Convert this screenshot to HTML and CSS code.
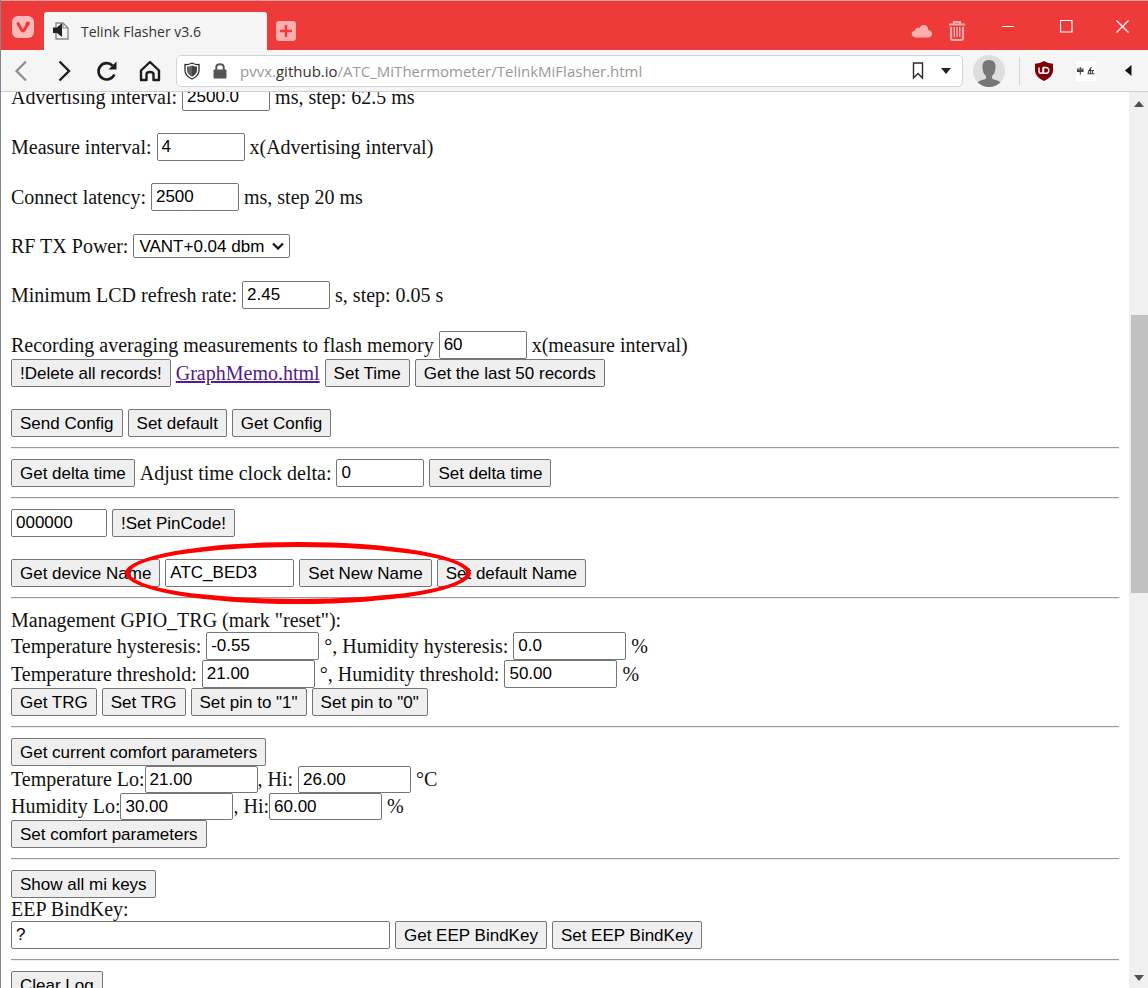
FILE: index.html
```html
<!DOCTYPE html>
<html lang="en">
<head>
<meta charset="utf-8">
<title>Telink Flasher v3.6</title>
<link rel="stylesheet" href="styles.css">
</head>
<body>
<div class="window">
  <header class="titlebar">
    <button class="icon-btn vivaldi" aria-label="Menu">
      <svg width="22" height="22" viewBox="0 0 22 22"><rect width="22" height="22" rx="6" fill="#ffb9b9"/><path d="M6 7.600 9.800 14.200q1.200 1.600 2.400 0L15.500 8" fill="none" stroke="#ef3a3a" stroke-width="3" stroke-linecap="round" stroke-linejoin="round"/><circle cx="15.800" cy="7.600" r="2.200" fill="#ef3a3a"/></svg>
    </button>
    <div class="tab">
      <svg width="16" height="18" viewBox="0 0 16 18"><path d="M3 1h7l5 5v11H3z" fill="#f5f5f5" stroke="#8a8a8a" stroke-width="1.4"/><path d="M10 1v5h5" fill="none" stroke="#8a8a8a" stroke-width="1.2"/><path d="M0 5.500h4L9 1v14l-5-4H0z" fill="#222"/></svg>
      <span>Telink Flasher v3.6</span>
    </div>
    <button class="icon-btn new-tab" aria-label="New tab">
      <svg width="20" height="20" viewBox="0 0 20 20"><rect width="20" height="20" rx="3" fill="#ffadad"/><path d="M10 4v12M4 10h12" stroke="#ef3a3a" stroke-width="2.400"/></svg>
    </button>
    <div class="window-tools">
      <button class="icon-btn cloud" aria-label="Sync"><svg width="22" height="14" viewBox="0 0 22 14"><path d="M4.500 13.500C-.5 13-.5 7 4 6.500 4.500 4 6.500 3.200 8.500 4 10-.2 17-.5 17.300 6c5 .3 5 7.500 0 7.500z" fill="#ffadad"/></svg></button>
      <button class="icon-btn trash" aria-label="Closed tabs"><svg width="18" height="20" viewBox="0 0 18 20"><path d="M1 3.500h16M6 2.500V1h6v1.500" fill="none" stroke="#ffadad" stroke-width="2.200"/><path d="M3 6v11q0 2 2 2h8q2 0 2-2V6" fill="none" stroke="#ffadad" stroke-width="2.200"/><path d="M6.300 6v10M9 6v10M11.700 6v10" stroke="#ffadad" stroke-width="1.400"/></svg></button>
      <button class="icon-btn minimize" aria-label="Minimize"><svg width="13" height="13" viewBox="0 0 13 13"><path d="M0 6.500h12" stroke="#fff"/></svg></button>
      <button class="icon-btn maximize" aria-label="Maximize"><svg width="13" height="13" viewBox="0 0 13 13"><path d="M.5.5h11.500v11.500H.5z" fill="none" stroke="#fff" stroke-width="1.200"/></svg></button>
      <button class="icon-btn close" aria-label="Close"><svg width="13" height="13" viewBox="0 0 13 13"><path d="m.5.5 12 12m0-12-12 12" stroke="#fff" stroke-width="1.200"/></svg></button>
    </div>
  </header>

  <nav class="toolbar">
    <div class="nav-buttons">
      <button class="icon-btn" aria-label="Back"><svg width="22" height="22" viewBox="0 0 22 22"><path d="M16 1.500 6.500 11l9.500 9.500" fill="none" stroke="#8c8c8c" stroke-width="2.200"/></svg></button>
      <button class="icon-btn" aria-label="Forward"><svg width="22" height="22" viewBox="0 0 22 22"><path d="m6.500 1.500 9.500 9.500-9.500 9.500" fill="none" stroke="#1c1c1c" stroke-width="2.400"/></svg></button>
      <button class="icon-btn" aria-label="Reload"><svg width="22" height="22" viewBox="0 0 22 22"><path d="M18.300 14.500A8.200 8.200 0 1 1 16.500 5.500" fill="none" stroke="#1c1c1c" stroke-width="2.600"/><path d="M20.500 1.500v8h-8z" fill="#1c1c1c"/></svg></button>
      <button class="icon-btn" aria-label="Home"><svg width="22" height="22" viewBox="0 0 22 22"><path d="M2 10.500 11 2l9 8.500V20h-5.500v-5.500q0-2.500-3.500-2.500t-3.500 2.500V20H2z" fill="none" stroke="#1c1c1c" stroke-width="2.400" stroke-linejoin="round"/></svg></button>
    </div>
    <div class="address">
      <svg width="16" height="18" viewBox="0 0 16 18"><path d="M8 1q4 2 7 1.500V9q-.5 5-7 8-6.500-3-7-8V2.500Q4 3 8 1z" fill="#fff" stroke="#2b2b2b" stroke-width="1.300"/><path d="M8 3.500q2.500 1.200 5 1.100V9q-.6 3.500-5 5.700z" fill="#444"/><path d="M8 3.500q-2.500 1.200-5 1.100V9q.6 3.500 5 5.700z" fill="#666"/></svg>
      <svg class="lock" width="14" height="16" viewBox="0 0 14 16"><rect x=".5" y="6.500" width="13" height="9" rx="1" fill="#555"/><path d="M3.300 7V4.500q0-3.200 3.700-3.200t3.700 3.200V7" fill="none" stroke="#555" stroke-width="2"/></svg>
      <div class="url" role="textbox" aria-label="Address">pvvx.<b>github.io</b>/ATC_MiThermometer/TelinkMiFlasher.html</div>
      <button class="icon-btn" aria-label="Bookmark"><svg width="12" height="18" viewBox="0 0 12 18"><path d="M1.500 1h9v15L6 11.500 1.500 16z" fill="#fff" stroke="#2b2b2b" stroke-width="1.400"/></svg></button>
      <button class="icon-btn history" aria-label="Address history"><svg width="10" height="6" viewBox="0 0 10 6"><path d="M0 0h10L5 6z" fill="#222"/></svg></button>
    </div>
    <button class="icon-btn profile" aria-label="Profile"><svg width="32" height="32" viewBox="0 0 32 32"><circle cx="16" cy="16" r="16" fill="#dedede"/><path d="M16 5c5 0 7 3.500 6.500 8-.3 4-1.500 6.500-3.500 8v2.500c2 1.500 6 1.500 8.500 3.800Q23 32 16 32T4.500 27.300C7 25 11 25 13 23.500V21c-2-1.500-3.200-4-3.500-8C9 8.500 11 5 16 5z" fill="#777"/></svg></button>
    <div class="extensions">
      <button class="icon-btn" aria-label="uBlock"><svg width="20" height="20" viewBox="0 0 20 20"><path d="M10 0q4 2.600 9 2.800V10q-.5 6-9 10-8.500-4-9-10V2.800Q6 2.600 10 0z" fill="#800008"/><path d="M5 6.500v4q0 1.800 2 1.800t2-1.800v-4M9.500 6.500v5.800h2q3.300 0 3.300-2.900t-3.300-2.900z" fill="none" stroke="#fff" stroke-width="1.400"/></svg></button>
      <button class="icon-btn" aria-label="Translate"><svg width="20" height="20" viewBox="0 0 20 20"><rect width="20" height="20" fill="#fff"/><path d="M1 9.500h6.500M4.300 6v7.500M1.500 8h5.500v2.500H1.500zM15.500 6 13 9.500h5M14.500 7.500v5M11.500 12.800h7M13 10l-1 2.500M16.500 9.500v3" fill="none" stroke="#444" stroke-width="1.100"/></svg></button>
      <button class="icon-btn" aria-label="Toggle extensions"><svg width="7" height="11" viewBox="0 0 7 11"><path d="M6.500 0v11L0 5.500z" fill="#111"/></svg></button>
    </div>
  </nav>

  <div class="viewport">
    <main class="page">
      <div class="row"><label for="adv">Advertising interval:</label><input id="adv" class="short" value="2500.0"><span>ms, step: 62.5 ms</span></div>
      <div class="row spaced"><label for="meas">Measure interval:</label><input id="meas" class="short" value="4"><span>x(Advertising interval)</span></div>
      <div class="row spaced"><label for="lat">Connect latency:</label><input id="lat" class="short" value="2500"><span>ms, step 20 ms</span></div>
      <div class="row spaced"><label for="power">RF TX Power:</label><span class="select"><select id="power"><option>VANT+0.04 dbm</option></select><svg width="12" height="8" viewBox="0 0 12 8"><path d="m1 1.500 5 5 5-5" fill="none" stroke="#111" stroke-width="2.200"/></svg></span></div>
      <div class="row spaced"><label for="lcd">Minimum LCD refresh rate:</label><input id="lcd" class="short" value="2.45"><span>s, step: 0.05 s</span></div>
      <div class="row spaced"><label for="rec">Recording averaging measurements to flash memory</label><input id="rec" class="short" value="60"><span>x(measure interval)</span></div>
      <div class="row"><button>!Delete all records!</button><a href="#graph">GraphMemo.html</a><button>Set Time</button><button>Get the last 50 records</button></div>
      <div class="row spaced"><button>Send Config</button><button>Set default</button><button>Get Config</button></div>
      <hr>
      <div class="row"><button>Get delta time</button><label for="delta">Adjust time clock delta:</label><input id="delta" class="short" value="0"><button>Set delta time</button></div>
      <hr>
      <div class="row"><input class="pin" aria-label="Pin code" value="000000"><button>!Set PinCode!</button></div>
      <div class="row spaced marked"><button>Get device Name</button><input class="name" aria-label="Device name" value="ATC_BED3"><button>Set New Name</button><button>Set default Name</button><span class="ring"></span></div>
      <hr>
      <div class="line">Management GPIO_TRG (mark "reset"):</div>
      <div class="row"><label for="th">Temperature hysteresis:</label><input id="th" value="-0.55"><label for="hh">°, Humidity hysteresis:</label><input id="hh" value="0.0"><span>%</span></div>
      <div class="row"><label for="tt">Temperature threshold:</label><input id="tt" value="21.00"><label for="ht">°, Humidity threshold:</label><input id="ht" value="50.00"><span>%</span></div>
      <div class="row"><button>Get TRG</button><button>Set TRG</button><button>Set pin to "1"</button><button>Set pin to "0"</button></div>
      <hr>
      <div class="row"><button>Get current comfort parameters</button></div>
      <div class="row snug"><label for="tlo">Temperature Lo:</label><input id="tlo" value="21.00"><label for="thi">, Hi:&nbsp;</label><input id="thi" value="26.00"><span>&nbsp;°C</span></div>
      <div class="row snug"><label for="hlo">Humidity Lo:</label><input id="hlo" value="30.00"><label for="hhi">, Hi:</label><input id="hhi" value="60.00"><span>&nbsp;%</span></div>
      <div class="row"><button>Set comfort parameters</button></div>
      <hr>
      <div class="row"><button>Show all mi keys</button></div>
      <div class="line"><label for="key">EEP BindKey:</label></div>
      <div class="row"><input id="key" class="key" value="?"><button>Get EEP BindKey</button><button>Set EEP BindKey</button></div>
      <hr>
      <div class="row"><button>Clear Log</button></div>
    </main>
    <div class="scrollbar">
      <svg width="10" height="6" viewBox="0 0 10 6"><path d="M0 6h10L5 0z" fill="#505050"/></svg>
      <div class="track"><div class="thumb"></div></div>
      <svg width="10" height="6" viewBox="0 0 10 6"><path d="M0 0h10L5 6z" fill="#505050"/></svg>
    </div>
  </div>
</div>
</body>
</html>
```

FILE: styles.css
```css
* { box-sizing: border-box; }
body { margin: 0; background: #fff; }

.window {
  display: flex;
  flex-direction: column;
  height: 100vh;
  overflow: hidden;
  border-left: 1px solid #85868c;
}

.icon-btn {
  display: flex;
  align-items: center;
  justify-content: center;
  padding: 0;
  border: 0;
  background: none;
}

/* Title bar */
.titlebar {
  display: flex;
  height: 50px;
  flex: none;
  background: #ef3a3a;
  border-top: 1px solid #e9a3a3;
  font: 14px "Open Sans", "Noto Sans", sans-serif;
}
.vivaldi { width: 43px; height: 51px; }
.tab {
  display: flex;
  align-items: center;
  gap: 12px;
  width: 223px;
  margin-top: 11px;
  padding-left: 9px;
  border-radius: 3px 3px 0 0;
  background: #f5f5f5;
  color: #333;
  white-space: nowrap;
}
.new-tab { margin: 20px 0 0 9px; height: 20px; }
.window-tools { display: flex; margin-left: auto; height: 50px; }
.cloud { width: 22px; padding-top: 10px; }
.trash { width: 48px; padding-top: 10px; }
.minimize { width: 54px; }
.maximize { width: 62px; }
.close { width: 51px; }

/* Navigation toolbar */
.toolbar {
  display: flex;
  align-items: center;
  height: 42px;
  flex: none;
  background: #f5f5f5;
  border-bottom: 1px solid #cfcfcf;
}
.nav-buttons { display: flex; gap: 21px; padding: 0 15px 0 9px; }
.address {
  display: flex;
  align-items: center;
  flex: 1;
  height: 32px;
  padding: 0 11px 0 7px;
  border: 1px solid #d4d4d4;
  border-radius: 5px;
  background: #fff;
}
.lock { margin: 0 13px; }
.url { flex: 1; font: 15px "Open Sans", "Noto Sans", sans-serif; color: #999; white-space: nowrap; }
.url b { font-weight: 400; color: #333; }
.history { margin-left: 17px; }
.profile { margin: 0 14px 0 10px; }
.extensions {
  display: flex;
  align-items: center;
  gap: 22px;
  height: 28px;
  padding: 0 16px 0 14px;
  border-left: 1px solid #d4d4d4;
}
.extensions .icon-btn:last-child { margin-left: 7px; }

/* Scrolled page */
.viewport { display: flex; flex: 1; min-height: 0; overflow: hidden; }
.page {
  flex: 1;
  margin-top: -9px;
  padding: 0 10px;
  font: 20px/23px "Liberation Serif", "Times New Roman", serif;
  color: #111;
  white-space: nowrap;
}
.row { display: flex; align-items: center; gap: 5px; min-height: 26px; }
.spaced { margin-top: 22px; }
.snug { gap: 0; }
.line { height: 23px; }
.page a { color: #551a8b; }
.page hr { height: 2px; margin: 10px 0; border: 0; border-top: 1px solid #9a9a9a; border-bottom: 1px solid #eee; }

.page input, .page button, .page select {
  height: 28px;
  margin: 0;
  border: 1px solid #767676;
  border-radius: 2px;
  font: 17px "Liberation Sans", Arial, sans-serif;
  color: #000;
}
.page button { padding: 1px 8px 0; background: #efefef; }
.page input { width: 113px; padding: 0 4px; background: #fff; }
.page .snug input { height: 27px; }
.page .short { width: 88px; }
.page .pin { width: 96px; }
.page .name { width: 129px; }
.page .key { width: 379px; }

.select { position: relative; display: flex; }
.page select { appearance: none; width: 157px; height: 24px; padding: 0 5px; background: #fff; }
.select svg { position: absolute; right: 6px; top: 8px; pointer-events: none; }

.marked { position: relative; }
.ring {
  position: absolute;
  left: 114px;
  top: -17px;
  width: 346px;
  height: 62px;
  border: 5px solid #f00;
  border-radius: 50%;
  pointer-events: none;
}

/* Scrollbar */
.scrollbar {
  display: flex;
  flex-direction: column;
  align-items: center;
  width: 19px;
  padding: 9px 0 7px;
  background: #f0f0f0;
}
.track { flex: 1; align-self: stretch; padding: 0 0 0 2px; }
.thumb { height: 32%; margin-top: 208px; background: #c1c1c1; }
```
